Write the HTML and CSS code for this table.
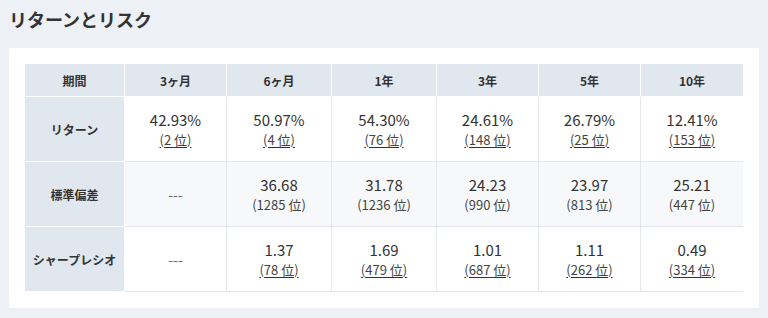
FILE: index.html
```html
<!DOCTYPE html>
<html lang="ja">
<head>
<meta charset="utf-8">
<title>リターンとリスク</title>
<link rel="stylesheet" href="styles.css">
</head>
<body>
<div class="page">
  <h1 class="title">リターンとリスク</h1>
  <section class="card">
    <table class="risk">
      <colgroup>
        <col class="c-label">
        <col class="c-102">
        <col class="c-105">
        <col class="c-105">
        <col class="c-102">
        <col class="c-102">
        <col class="c-102">
      </colgroup>
      <thead>
        <tr>
          <th>期間</th><th>3ヶ月</th><th>6ヶ月</th><th>1年</th><th>3年</th><th>5年</th><th>10年</th>
        </tr>
      </thead>
      <tbody>
        <tr>
          <th>リターン</th>
          <td><div class="val">42.93%</div><a class="rank" href="#">(2 位)</a></td>
          <td><div class="val">50.97%</div><a class="rank" href="#">(4 位)</a></td>
          <td><div class="val">54.30%</div><a class="rank" href="#">(76 位)</a></td>
          <td><div class="val">24.61%</div><a class="rank" href="#">(148 位)</a></td>
          <td><div class="val">26.79%</div><a class="rank" href="#">(25 位)</a></td>
          <td><div class="val">12.41%</div><a class="rank" href="#">(153 位)</a></td>
        </tr>
        <tr class="alt">
          <th>標準偏差</th>
          <td><span class="none">---</span></td>
          <td><div class="val">36.68</div><span class="rank">(1285 位)</span></td>
          <td><div class="val">31.78</div><span class="rank">(1236 位)</span></td>
          <td><div class="val">24.23</div><span class="rank">(990 位)</span></td>
          <td><div class="val">23.97</div><span class="rank">(813 位)</span></td>
          <td><div class="val">25.21</div><span class="rank">(447 位)</span></td>
        </tr>
        <tr>
          <th>シャープレシオ</th>
          <td><span class="none">---</span></td>
          <td><div class="val">1.37</div><a class="rank" href="#">(78 位)</a></td>
          <td><div class="val">1.69</div><a class="rank" href="#">(479 位)</a></td>
          <td><div class="val">1.01</div><a class="rank" href="#">(687 位)</a></td>
          <td><div class="val">1.11</div><a class="rank" href="#">(262 位)</a></td>
          <td><div class="val">0.49</div><a class="rank" href="#">(334 位)</a></td>
        </tr>
      </tbody>
    </table>
  </section>
</div>
</body>
</html>
```

FILE: styles.css
```css
html, body {
  margin: 0;
  padding: 0;
  background: #edf0f4;
}
body {
  font-family: "Noto Sans CJK JP", "Noto Sans", sans-serif;
  color: #333;
}
.page {
  padding: 7px 9px 10px;
}
.title {
  margin: 0 0 17px;
  font-size: 18px;
  line-height: 24px;
  font-weight: 700;
  color: #333;
}
.card {
  background: #fff;
  padding: 16px;
}
.risk {
  width: 718px;
  table-layout: fixed;
  border-collapse: separate;
  border-spacing: 0;
}
.c-label { width: 100px; }
.c-102 { width: 102px; }
.c-105 { width: 105px; }
.risk th,
.risk td {
  padding: 0;
  text-align: center;
  vertical-align: middle;
  box-sizing: border-box;
}
.risk thead th {
  height: 33px;
  background: #e1e7ef;
  border-right: 1px solid #fff;
  border-bottom: 1px solid #fff;
  font-size: 12px;
  font-weight: 700;
  color: #333;
}
.risk thead th:last-child {
  border-right: 0;
}
.risk tbody th {
  height: 65px;
  background: #e1e7ef;
  border-right: 1px solid #fff;
  border-bottom: 1px solid #fff;
  font-size: 12px;
  font-weight: 700;
  color: #333;
}
.risk tbody td {
  height: 65px;
  border-right: 1px solid #e3e6ea;
  border-bottom: 1px solid #e3e6ea;
  background: #fff;
  font-size: 13px;
  line-height: 18px;
}
.risk tbody td:last-child {
  border-right: 0;
}
.risk tbody tr.alt td {
  background: #f7f8fa;
}
.val {
  font-size: 15px;
  line-height: 22px;
  color: #333;
}
.rank {
  font-size: 13px;
  line-height: 18px;
  color: #444;
  text-decoration: none;
}
a.rank {
  text-decoration: underline;
  text-decoration-color: #333;
  text-underline-offset: 2px;
}
.none {
  font-size: 14px;
  color: #666;
}
```
